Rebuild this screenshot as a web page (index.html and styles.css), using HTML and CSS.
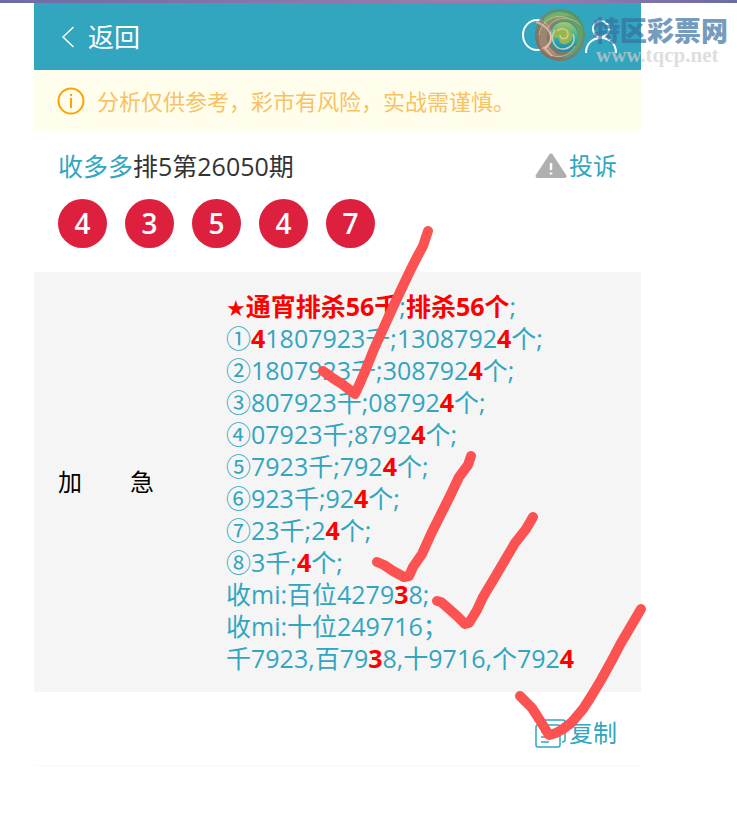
FILE: index.html
```
<!DOCTYPE html>
<html lang="zh-CN">
<head>
    <meta charset="UTF-8">
    <meta name="viewport" content="width=device-width, initial-scale=1.0">
    <title>排5第26050期</title>
    <link rel="stylesheet" href="styles.css">
</head>
<body>

<div class="top-line"></div>

<div class="page">
    <header class="header">
        <a class="back" href="#">
            <svg width="14" height="22" viewBox="0 0 14 22" fill="none" stroke="#fff" stroke-width="1.5">
                <path d="M12.500 1 2 11l10.500 10"/>
            </svg>
            返回
        </a>
        <div class="header-icons">
            <button type="button" aria-label="搜索">
                <svg width="36" height="36" viewBox="0 0 36 36" fill="none" stroke="#fff" stroke-width="2">
                    <ellipse cx="15" cy="16" rx="14" ry="15"/>
                    <path d="M25 27l8 8"/>
                </svg>
            </button>
            <button type="button" aria-label="我的">
                <svg width="32" height="36" viewBox="0 0 32 36" fill="none" stroke="#fff" stroke-width="2">
                    <circle cx="16" cy="10" r="8"/>
                    <path d="M1 34c0-9 6-15 15-15s15 6 15 15"/>
                </svg>
            </button>
        </div>
    </header>

    <div class="notice">
        <svg width="28" height="28" viewBox="0 0 28 28" fill="none" stroke="#ffa200" stroke-width="2">
            <circle cx="14" cy="14" r="12.500"/>
            <path d="M14 11v10M14 7v2"/>
        </svg>
        <span>分析仅供参考，彩市有风险，实战需谨慎。</span>
    </div>

    <section class="issue">
        <div class="issue-head">
            <h1><a href="#">收多多</a>排5第26050期</h1>
            <a class="action" href="#">
                <svg width="32" height="26" viewBox="0 0 32 26">
                    <path d="M16 2.500 29.500 23h-27z" fill="#afafaf" stroke="#afafaf" stroke-width="4" stroke-linejoin="round"/>
                    <path d="M16 10v7M16 19.500v2" stroke="#fff" stroke-width="2.500"/>
                </svg>
                投诉
            </a>
        </div>
        <ul class="balls">
            <li>4</li>
            <li>3</li>
            <li>5</li>
            <li>4</li>
            <li>7</li>
        </ul>
    </section>

    <section class="plan">
        <div class="plan-name">加　　急</div>
        <div class="plan-text">
            <p><b><span class="star">★</span>通宵排杀56千</b>;<b>排杀56个</b>;</p>
            <p>①<b>4</b>1807923千;1308792<b>4</b>个;</p>
            <p>②1807923千;308792<b>4</b>个;</p>
            <p>③807923千;08792<b>4</b>个;</p>
            <p>④07923千;8792<b>4</b>个;</p>
            <p>⑤7923千;792<b>4</b>个;</p>
            <p>⑥923千;92<b>4</b>个;</p>
            <p>⑦23千;2<b>4</b>个;</p>
            <p>⑧3千;<b>4</b>个;</p>
            <p>收mi:百位4279<b>3</b>8;</p>
            <p>收mi:十位249716；</p>
            <p>千7923,百79<b>3</b>8,十9716,个792<b>4</b></p>
        </div>
    </section>

    <footer class="footer">
        <button type="button" class="action">
            <svg width="32" height="30" viewBox="0 0 32 30" fill="none" stroke="#32a5bf" stroke-width="1.500">
                <rect x="1" y="7" width="24" height="22" rx="2"/>
                <path d="M2 2h26q2 0 2 2v18q0 2-3 2M6 14h12M6 19h12M6 24h8"/>
            </svg>
            复制
        </button>
    </footer>
</div>

<!-- site logo -->
<div class="watermark">
    <svg width="52" height="54" viewBox="0 0 52 54" fill="none">
        <defs>
            <linearGradient id="ring" x1="1" y1="0" x2="0" y2="1">
                <stop offset="0" stop-color="#4f9a4c"/>
                <stop offset=".5" stop-color="#7d8070"/>
                <stop offset="1" stop-color="#a0573f"/>
            </linearGradient>
            <linearGradient id="core" x1="0" y1="0" x2="0" y2="1">
                <stop offset="0" stop-color="#b5d060"/>
                <stop offset=".5" stop-color="#3bb39a"/>
                <stop offset="1" stop-color="#1580bd"/>
            </linearGradient>
        </defs>
        <ellipse cx="26" cy="27" rx="25" ry="26" fill="url(#ring)"/>
        <path d="M10 11C19 0 40 2 47 18 38 8 20 7 10 23z" fill="#79b75a"/>
        <path d="M48 18c4 14-4 30-20 33 12-7 19-18 15-30-4-9-17-12-24-5 7-11 23-11 29 2z" fill="#6f9f5b"/>
        <path d="M6 38C1 22 12 9 27 10 15 14 10 25 14 36c3 8 10 12 18 11-11 5-22 0-26-9z" fill="#b08062"/>
        <ellipse cx="30" cy="29" rx="14" ry="15" fill="url(#core)"/>
        <path d="M18 29c0-9 10-13 17-8 6 5 4 13-3 15-4 1-8-2-7-6" fill="#a9b93e"/>
        <path d="M21 22c-6 9 0 20 9 19 8-1 12-8 9-15" stroke="#d6dcb0" stroke-width="1.500"/>
        <path d="M26 27c0 5 8 5 8-1 0-5-7-7-11-3" stroke="#e2dc86" stroke-width="1.500"/>
        <path d="M5 27C7 12 22 4 36 11M9 39c7 13 25 13 32-1M46 17C37 7 20 8 13 21" stroke="#d5ba88"/>
        <path d="M2 14c8 2 15 9 15 16 0 4-3 8-6 10l7 8" stroke="#f0b49c" stroke-width="2"/>
    </svg>
    <div class="watermark-text">
        <strong>特区彩票网</strong>
        <span>www.tqcp.net</span>
    </div>
</div>

<!-- hand drawn ticks -->
<svg class="marks" width="737" height="824" viewBox="0 0 737 824" fill="none" stroke="#fc5252" stroke-width="10" stroke-linecap="round" stroke-linejoin="round">
    <path d="M428 231l-5 15-7 13-6 12-9 19-8 17-9 20-10 22-8 20-6 14-5 11-13-10-8-5-11-8"/>
    <path d="M471 456l-3 9-9 12-9 19-10 20-9 18-9 20-9 13-4 9-5 1-11-6-9-6-7-3"/>
    <path d="M533 517l-7 12-11 14-10 17-10 17-12 20-6 13-8 13-4 1-8-8-9-8-7-6-4-1"/>
    <path d="M641 609l-10 17-10 17-9 17-11 20-9 15-9 14-11 13-9 7-7 4-7 2-8-13-9-14-12-12"/>
</svg>

</body>
</html>
```
FILE: styles.css
```
* {
    box-sizing: border-box;
}
body {
    margin: 0;
    position: relative;
    background-color: #fff;
    color: #333;
    font-family: "Open Sans", "Noto Sans CJK SC", sans-serif;
    font-size: 24px;
    line-height: 32px;
}
a {
    color: #32a5bf;
    text-decoration: none;
}
button {
    padding: 0;
    border: none;
    background-color: transparent;
    font: inherit;
    cursor: pointer;
}
svg {
    display: block;
    flex: none;
}
.top-line {
    height: 3px;
    background: linear-gradient(to right, #6c6ba6, #9c7bab 60%, #9a7aac 75%, #6a6ca5);
}
.page {
    margin: 0 96px 0 34px;
}
.header {
    display: flex;
    justify-content: space-between;
    align-items: center;
    height: 67px;
    padding: 0 24px 0 27px;
    background-color: #32a5bf;
}
.back {
    display: flex;
    align-items: center;
    gap: 13px;
    color: #fff;
    font-size: 26px;
}
.header-icons {
    display: flex;
    gap: 27px;
}
.notice {
    display: flex;
    align-items: center;
    gap: 12px;
    height: 61px;
    padding: 0 23px;
    background-color: #fffeec;
    color: #f8c263;
    font-size: 22px;
}
.issue {
    padding: 19px 24px 24px;
}
.issue-head {
    display: flex;
    justify-content: space-between;
    align-items: center;
}
h1 {
    margin: 0;
    font-size: 25px;
    font-weight: normal;
}
.action {
    display: flex;
    align-items: center;
    gap: 2px;
    color: #32a5bf;
}
.balls {
    display: flex;
    gap: 18px;
    margin: 17px 0 0;
    padding: 0;
    list-style: none;
}
.balls li {
    width: 49px;
    height: 49px;
    border-radius: 50%;
    background-color: #dc203e;
    color: #fff;
    font-size: 28px;
    font-weight: 600;
    line-height: 49px;
    text-align: center;
}
.plan {
    display: flex;
    align-items: center;
    padding: 18px 24px;
    background-color: #f5f5f5;
}
.plan-name {
    flex: none;
    width: 168px;
    color: #000;
}
.plan-text {
    color: #32a5bf;
    font-size: 25px;
}
.plan-text p {
    margin: 0;
    white-space: nowrap;
}
.plan-text b {
    color: #f00;
}
.star {
    font-family: "DejaVu Sans", sans-serif;
    font-size: 22px;
    line-height: 1;
}
.footer {
    display: flex;
    justify-content: flex-end;
    align-items: center;
    height: 74px;
    padding: 8px 24px 0;
    border-bottom: 1px solid #f9f9f9;
}
.watermark {
    position: absolute;
    top: 8px;
    right: 9px;
    display: flex;
    gap: 7px;
    opacity: .85;
}
.watermark-text {
    display: flex;
    flex-direction: column;
    padding-top: 9px;
    opacity: .8;
}
.watermark strong {
    color: #386f9f;
    font-size: 27px;
    font-weight: 900;
    line-height: 28px;
}
.watermark span {
    padding-left: 3px;
    color: #d0d0d0;
    font-family: "Liberation Serif", serif;
    font-size: 21px;
    font-weight: bold;
    line-height: 20px;
}
.marks {
    position: absolute;
    top: 0;
    left: 0;
    pointer-events: none;
}
```
